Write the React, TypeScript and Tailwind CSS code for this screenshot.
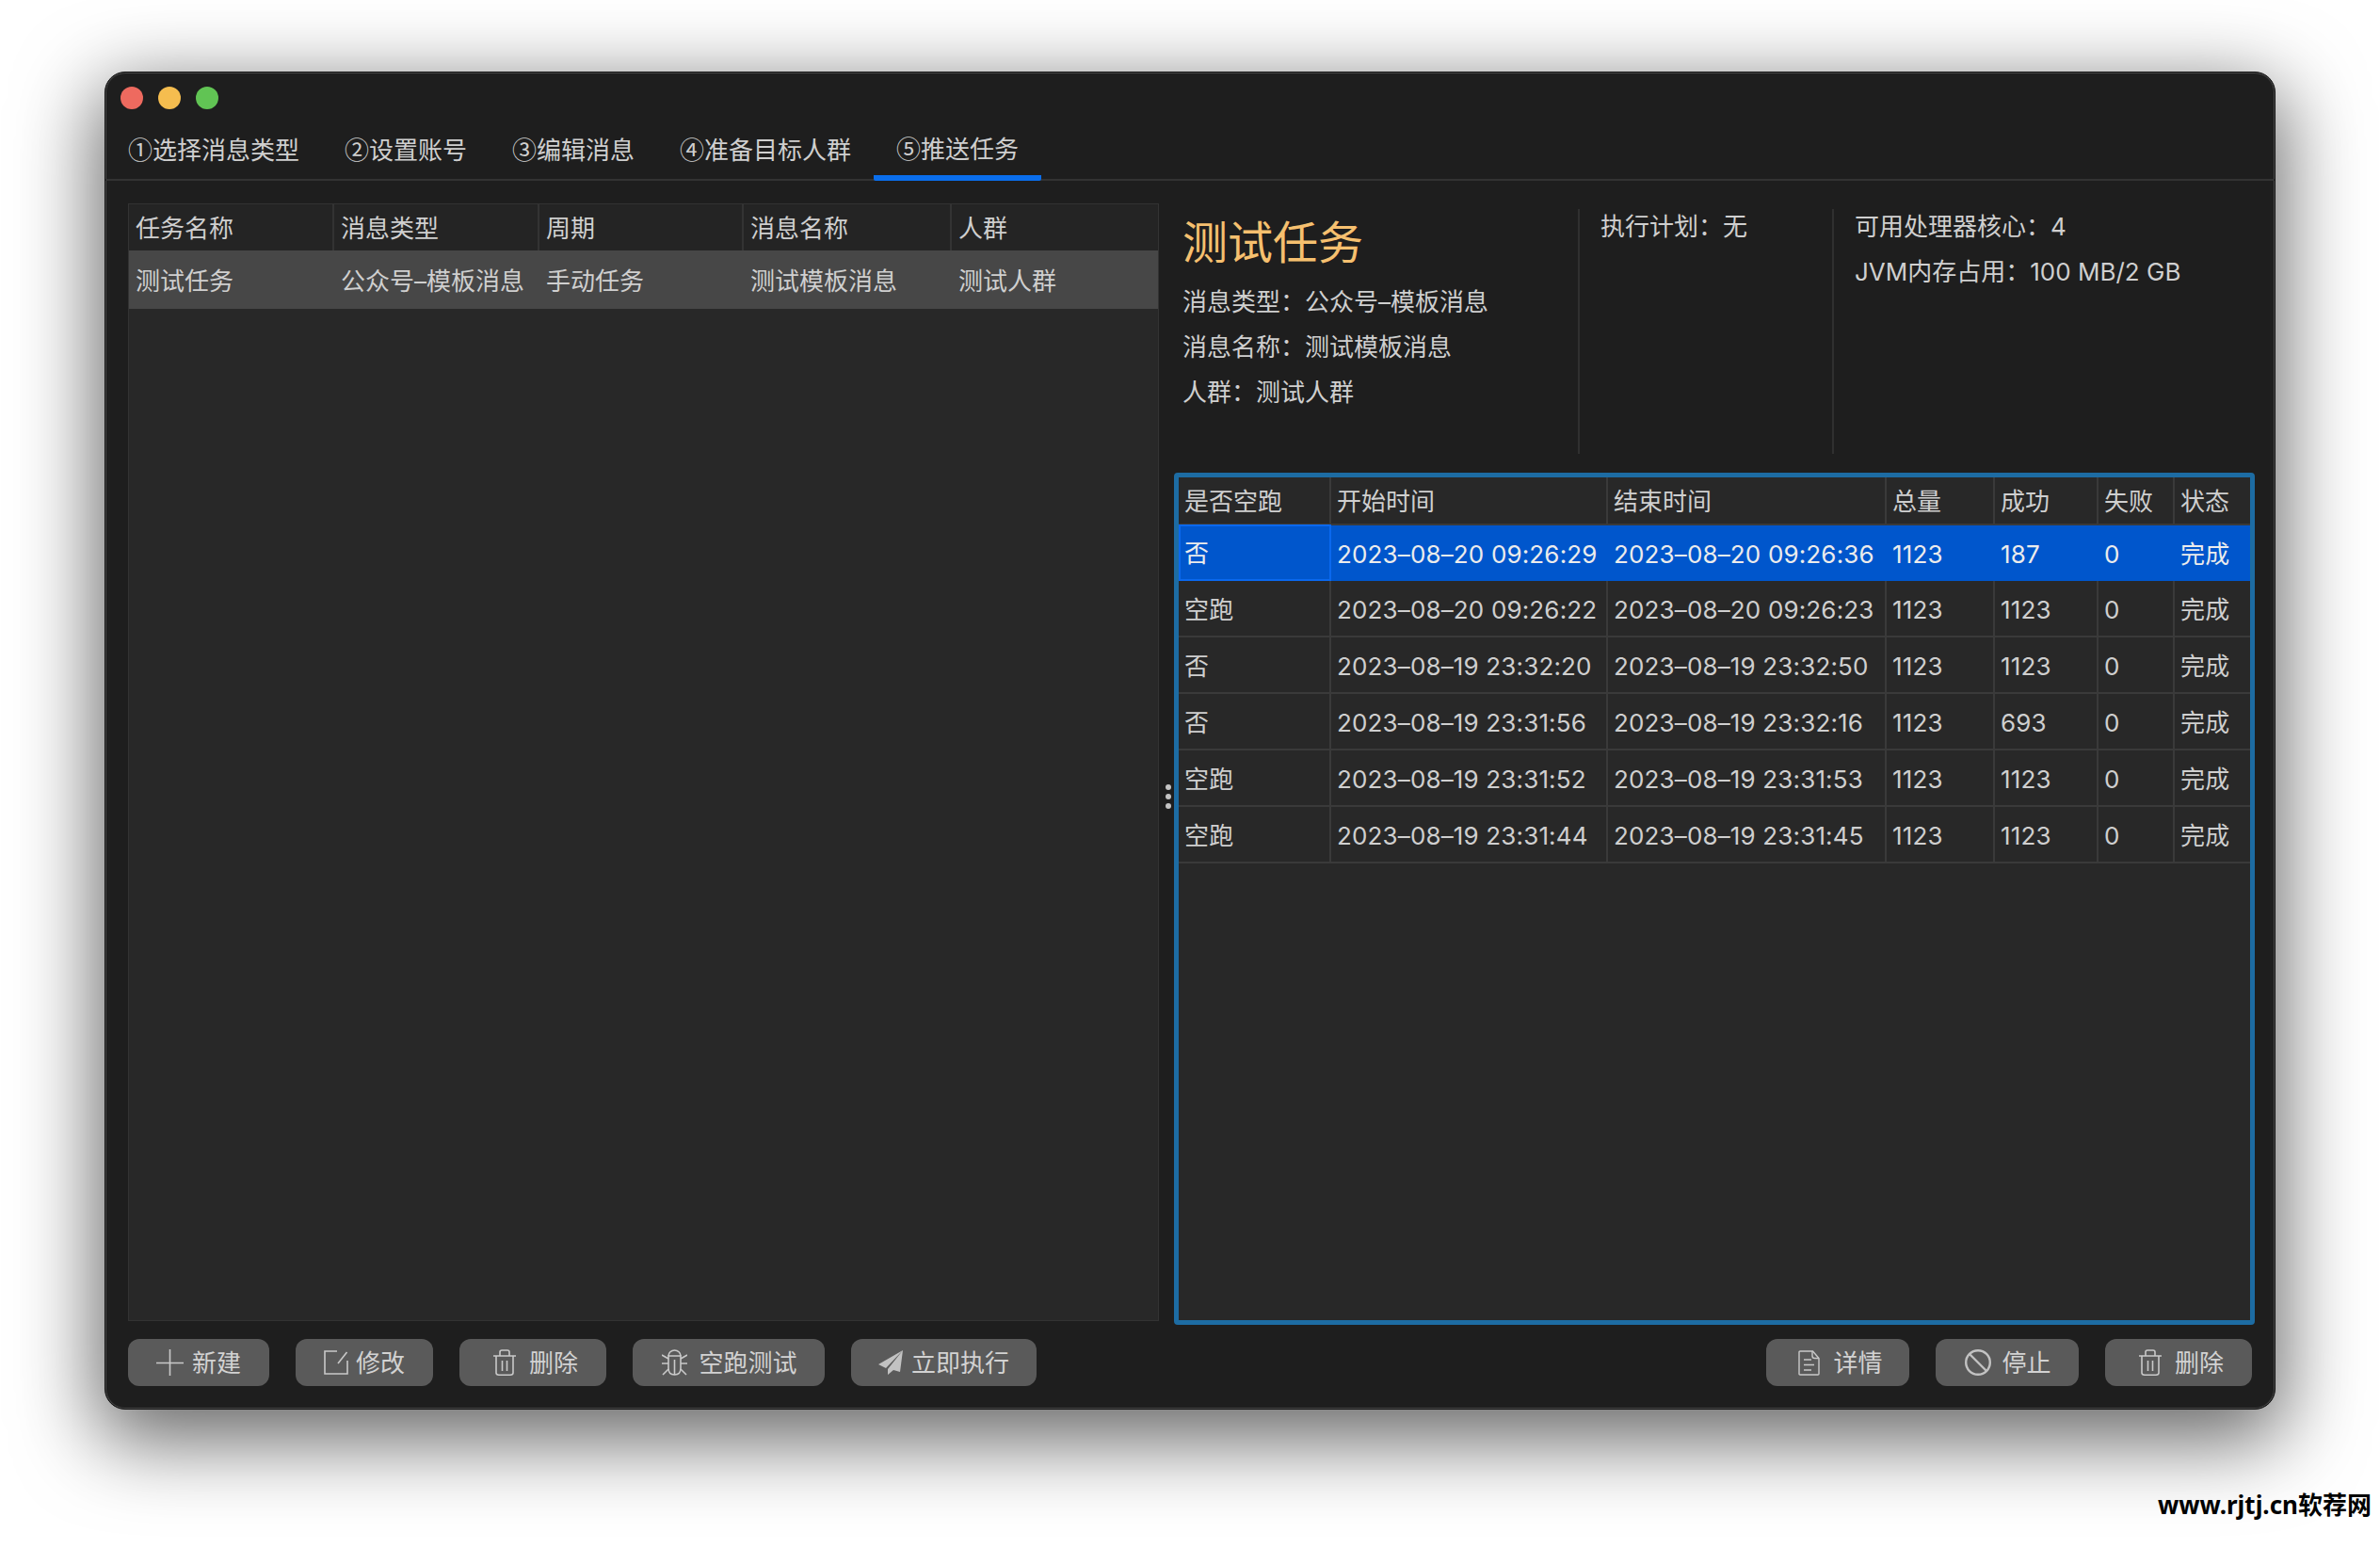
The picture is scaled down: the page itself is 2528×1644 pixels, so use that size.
import type { ReactNode } from "react";

const iconCls = "fill-none stroke-[#c9c9c9] shrink-0";

const IconPlus = () => (
  <svg viewBox="0 0 29 28" className={`w-[29px] h-[28px] ${iconCls}`} strokeWidth="1.6">
    <path d="M0 14.500h29M14.500 0v28" />
  </svg>
);

const IconEdit = () => (
  <svg viewBox="0 0 26 26" className={`w-[26px] h-[26px] ${iconCls}`} strokeWidth="1.6">
    <path d="M14 1H1v24h24V11" />
    <path d="M24.500 2 15 14" />
  </svg>
);

const IconTrash = () => (
  <svg viewBox="0 0 24 28" className={`w-[24px] h-[28px] ${iconCls}`} strokeWidth="1.6">
    <path d="M0 7h24M7 7V3q0-2 2-2h6q2 0 2 2v4" />
    <path d="M3 7v18q0 2.200 3 2.200h12q3 0 3-2.200V7" />
    <path d="M9.500 12v11M14.500 12v11" />
  </svg>
);

const IconBug = () => (
  <svg viewBox="0 0 27 28" className={`w-[27px] h-[28px] ${iconCls}`} strokeWidth="1.6">
    <path d="M7 7a6.500 6 0 0 1 13 0" />
    <path d="M7 7h13v13q0 7-6.500 7T7 20z" />
    <path d="M13.500 11v16M0 6l7 4M27 6l-7 4M0 15h7M27 15h-7M1 27l6-6M26 27l-6-6" />
  </svg>
);

const IconPlane = () => (
  <svg viewBox="0 0 26 26" className="w-[26px] h-[26px] fill-[#c2c2c2] shrink-0">
    <path d="M26 0 0 15l8 4zM26 0 10 20v6l6-5 7 2z" />
  </svg>
);

const IconDoc = () => (
  <svg viewBox="0 0 23 27" className={`w-[23px] h-[27px] ${iconCls}`} strokeWidth="1.4">
    <path d="M2 1h13.500L22 8.500V25q0 1-1 1H2q-1 0-1-1V2q0-1 1-1z" />
    <path d="M15 1v5q0 2.500 2.500 2.500H22M6 10h8M6 15.500h11M6 21h8" />
  </svg>
);

const IconStop = () => (
  <svg viewBox="0 0 28 28" className="w-[28px] h-[28px] fill-none stroke-[#c2c2c2] shrink-0" strokeWidth="2.400">
    <circle cx="14" cy="14" r="12.800" />
    <path d="M5 5l18 18" />
  </svg>
);

const tabs = ["①选择消息类型", "②设置账号", "③编辑消息", "④准备目标人群", "⑤推送任务"];

const taskHead = ["任务名称", "消息类型", "周期", "消息名称", "人群"];
const taskRow = ["测试任务", "公众号–模板消息", "手动任务", "测试模板消息", "测试人群"];

const runHead = ["是否空跑", "开始时间", "结束时间", "总量", "成功", "失败", "状态"];
const runs = [
  ["否", "2023–08–20 09:26:29", "2023–08–20 09:26:36", "1123", "187", "0", "完成"],
  ["空跑", "2023–08–20 09:26:22", "2023–08–20 09:26:23", "1123", "1123", "0", "完成"],
  ["否", "2023–08–19 23:32:20", "2023–08–19 23:32:50", "1123", "1123", "0", "完成"],
  ["否", "2023–08–19 23:31:56", "2023–08–19 23:32:16", "1123", "693", "0", "完成"],
  ["空跑", "2023–08–19 23:31:52", "2023–08–19 23:31:53", "1123", "1123", "0", "完成"],
  ["空跑", "2023–08–19 23:31:44", "2023–08–19 23:31:45", "1123", "1123", "0", "完成"],
];

const taskCols = "grid grid-cols-[218px_218px_217px_221px_1fr]";
const runCols = "grid grid-cols-[162px_294px_296px_115px_110px_81px_1fr]";

interface ToolButtonProps {
  icon: ReactNode;
  label: string;
  className: string;
}

const ToolButton = ({ icon, label, className }: ToolButtonProps) => (
  <button className={`h-[50px] rounded-[12px] bg-[#5a5a5a] flex items-center justify-center text-[#d2d2d2] text-[26px] ${className}`}>
    {icon}
    <span>{label}</span>
  </button>
);

export default function App() {
  return (
    <div className="relative w-[2528px] h-[1644px] overflow-hidden bg-white pl-[111px] pt-[76px] text-[#cfcfcf] text-[26px] [font-family:Inter,'Noto_Sans_CJK_SC',sans-serif]">
      <div className="w-[2306px] h-[1421px] flex flex-col rounded-[22px] border border-[#101010] bg-[#1e1e1e] shadow-[inset_0_0_0_1px_#4a4a4a,0_25px_85px_8px_rgba(0,0,0,0.6)]">
        {/* title bar */}
        <div className="h-[39px] shrink-0 flex items-end gap-[16px] pl-[16px]">
          <span className="w-[24px] h-[24px] rounded-full bg-[#ee6a5f]" />
          <span className="w-[24px] h-[24px] rounded-full bg-[#f5bd4f]" />
          <span className="w-[24px] h-[24px] rounded-full bg-[#61c454]" />
        </div>

        <div className="h-[76px] shrink-0 flex border-b-2 border-[#333333] [font-family:'Noto_Sans_CJK_SC',sans-serif]">
          {tabs.map((tab, i) => (
            <div
              key={tab}
              className={
                i === 4
                  ? "px-[24px] pt-[11px] -mb-[2px] flex items-center border-b-[6px] border-[#0a6eec] rounded-b-[2px]"
                  : "px-[24px] pt-[9px] flex items-center"
              }
            >
              {tab}
            </div>
          ))}
        </div>

        <div className="flex-1 min-h-0 flex flex-col px-[24px] pt-[24px] pb-[24px]">
          <div className="flex-1 min-h-0 flex">
            {/* task table */}
            <div className="w-[1095px] shrink-0 bg-[#282828] border border-[#333333]">
              <div className={`${taskCols} h-[49px] bg-[#242424]`}>
                {taskHead.map((h, i) => (
                  <div key={h} className={i < 4 ? "pl-[7px] pt-[3px] leading-[46px] border-r-2 border-[#333333]" : "pl-[7px] pt-[3px] leading-[46px]"}>
                    {h}
                  </div>
                ))}
              </div>
              <div className={`${taskCols} h-[62px] bg-[#474747]`}>
                {taskRow.map((c) => (
                  <div key={c} className="pl-[7px] pt-[3px] leading-[59px] whitespace-nowrap">
                    {c}
                  </div>
                ))}
              </div>
            </div>

            {/* drag handle */}
            <div className="w-[16px] shrink-0 flex flex-col items-center justify-center gap-[4px] pl-[4px] pt-[72px]">
              <span className="w-[6px] h-[6px] rounded-full bg-[#c4c4c4]" />
              <span className="w-[6px] h-[6px] rounded-full bg-[#c4c4c4]" />
              <span className="w-[6px] h-[6px] rounded-full bg-[#c4c4c4]" />
            </div>

            <div className="w-[1148px] shrink-0 flex flex-col">
              {/* task detail */}
              <div className="h-[286px] shrink-0 pt-[6px] pb-[20px] flex">
                <div className="w-[431px] shrink-0 pl-[9px] pt-[5px] border-r-2 border-[#303030]">
                  <div className="h-[60px] mb-[10px] text-[48px] leading-[62px] text-[#f6c06f]">测试任务</div>
                  <div className="leading-[48px]">消息类型：公众号–模板消息</div>
                  <div className="leading-[48px]">消息名称：测试模板消息</div>
                  <div className="leading-[48px]">人群：测试人群</div>
                </div>
                <div className="w-[270px] shrink-0 pl-[22px] leading-[38px] border-r-2 border-[#303030]">执行计划：无</div>
                <div className="pl-[22px] leading-[38px]">
                  <div className="mb-[10px]">可用处理器核心：4</div>
                  <div>JVM内存占用：100 MB/2 GB</div>
                </div>
              </div>

              {/* run table */}
              <div className="flex-1 min-h-0 -mb-[4px] border-[5px] border-[#1d6ca3] rounded-[4px] bg-[#282828]">
                <div className={`${runCols} h-[50px]`}>
                  {runHead.map((h, i) => (
                    <div
                      key={h}
                      className={
                        i < 6
                          ? "pl-[6px] pt-[3px] leading-[46px] border-r-2 border-b-2 border-[#3a3a3a]"
                          : "pl-[6px] pt-[3px] leading-[45px] border-b-2 border-[#3a3a3a]"
                      }
                    >
                      {h}
                    </div>
                  ))}
                </div>
                {runs.map((row, r) => (
                  <div
                    key={r}
                    className={r === 0 ? `${runCols} h-[60px] bg-[#0056cc] text-[#ececec] tracking-[0.15px]` : `${runCols} h-[60px] tracking-[0.15px]`}
                  >
                    {row.map((c, i) => {
                      if (r === 0) {
                        return (
                          <div
                            key={i}
                            className={i === 0 ? "pl-[4px] pt-[2px] leading-[54px] border-2 border-[#0a68ee]" : "pl-[6px] pt-[3px] leading-[57px] whitespace-nowrap"}
                          >
                            {c}
                          </div>
                        );
                      }
                      return (
                        <div
                          key={i}
                          className={
                            i < 6
                              ? "pl-[6px] pt-[4px] leading-[54px] whitespace-nowrap border-r-2 border-b-2 border-[#3a3a3a]"
                              : "pl-[6px] pt-[4px] leading-[54px] whitespace-nowrap border-b-2 border-[#3a3a3a]"
                          }
                        >
                          {c}
                        </div>
                      );
                    })}
                  </div>
                ))}
              </div>
            </div>
          </div>

          {/* toolbars */}
          <div className="shrink-0 mt-[19px] flex justify-between">
            <div className="flex gap-[28px]">
              <ToolButton icon={<IconPlus />} label="新建" className="w-[150px] gap-[9px]" />
              <ToolButton icon={<IconEdit />} label="修改" className="w-[146px] gap-[8px]" />
              <ToolButton icon={<IconTrash />} label="删除" className="w-[156px] gap-[14px] pl-[6px]" />
              <ToolButton icon={<IconBug />} label="空跑测试" className="w-[204px] gap-[12px] pl-[2px]" />
              <ToolButton icon={<IconPlane />} label="立即执行" className="w-[197px] gap-[9px]" />
            </div>
            <div className="flex gap-[28px]">
              <ToolButton icon={<IconDoc />} label="详情" className="w-[152px] gap-[14px] pl-[6px]" />
              <ToolButton icon={<IconStop />} label="停止" className="w-[152px] gap-[11px] pl-[2px]" />
              <ToolButton icon={<IconTrash />} label="删除" className="w-[156px] gap-[14px] pl-[6px]" />
            </div>
          </div>
        </div>
      </div>

      {/* watermark */}
      <div className="absolute right-[9px] top-[1580px] text-[26px] leading-[36px] font-bold text-black [font-family:'Noto_Sans','Noto_Sans_CJK_SC',sans-serif]">
        www.rjtj.cn软荐网
      </div>
    </div>
  );
}
